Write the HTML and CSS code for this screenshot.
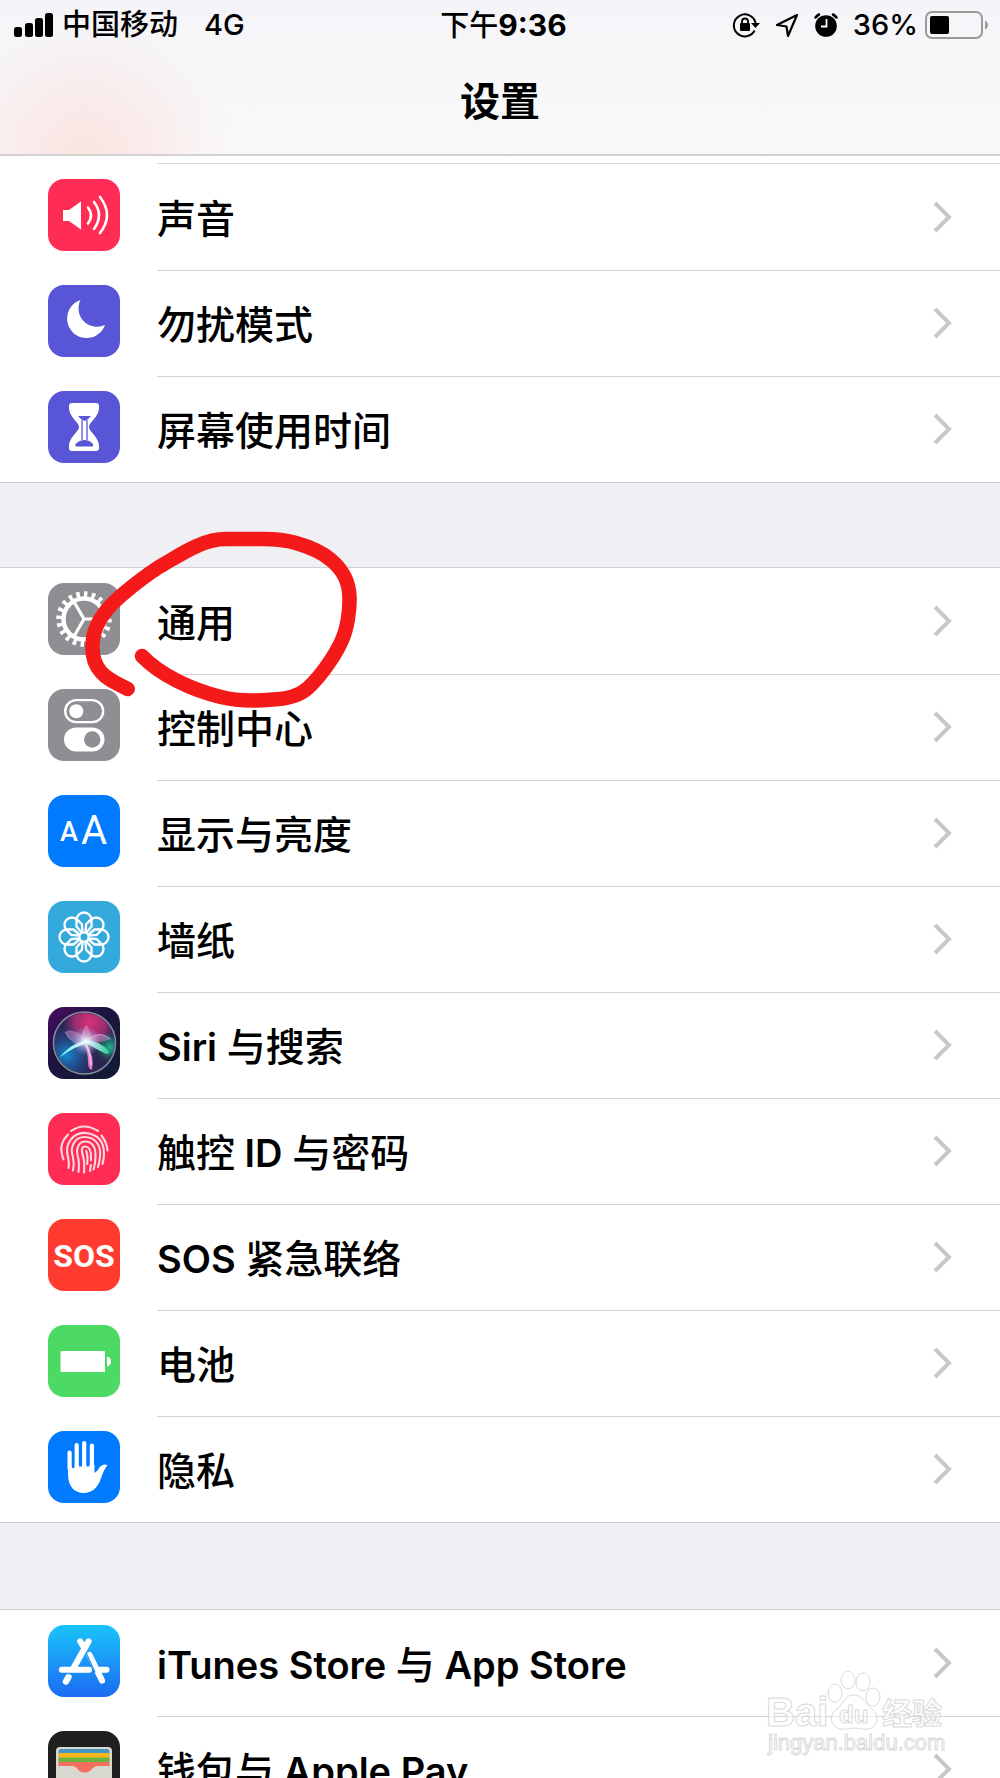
FILE: index.html
```html
<!DOCTYPE html>
<html lang="zh-CN">
<head>
  <meta charset="UTF-8">
  <meta name="viewport" content="width=device-width, initial-scale=1.0">
  <title>设置</title>
  <link rel="stylesheet" href="styles.css">
</head>
<body>
  <!-- Shared shapes -->
  <svg class="defs" aria-hidden="true">
    <symbol id="chevron" viewBox="0 0 20 32">
      <path d="M2 2l14 14L2 30" fill="none" stroke="#c7c7cc" stroke-width="4"/>
    </symbol>
    <symbol id="petal" viewBox="0 0 72 72">
      <path d="M34 32L28.500 25.500V19A7.500 7.500 0 1 1 43.500 19V25.500L38 32" fill="none" stroke="#fff" stroke-width="2.300"/>
    </symbol>
  </svg>

  <header class="header">
    <div class="status-bar">
      <div class="status-left">
        <svg width="40" height="26" viewBox="0 0 40 26" aria-hidden="true">
          <rect x="0" y="15" width="8" height="10" rx="2.5"/>
          <rect x="11" y="11" width="8" height="14" rx="2.5"/>
          <rect x="21" y="6" width="8" height="19" rx="2.5"/>
          <rect x="31" y="1" width="8" height="24" rx="2.5"/>
        </svg>
        <span class="carrier">中国移动</span>
        <span class="network">4G</span>
      </div>
      <div class="status-time">下午<b>9:36</b></div>
      <div class="status-right">
        <!-- rotation lock -->
        <svg width="28" height="28" viewBox="0 0 28 28" aria-hidden="true">
          <path d="M22.6 19.5A11 11 0 1 1 23.6 12" fill="none" stroke="#000" stroke-width="2"/>
          <path d="M19 12h9l-4.500 5z"/>
          <rect x="8" y="12" width="10" height="8" rx="1"/>
          <path d="M10 12.500v-2a3 3 0 0 1 6 0v2" fill="none" stroke="#000" stroke-width="1.800"/>
        </svg>
        <!-- location -->
        <svg width="24" height="26" viewBox="0 0 24 26" aria-hidden="true">
          <path d="M22 3L2 13l9.500 1.500L13 24z" fill="none" stroke="#000" stroke-width="2.200" stroke-linejoin="round"/>
        </svg>
        <!-- alarm -->
        <svg width="24" height="26" viewBox="0 0 24 26" aria-hidden="true">
          <circle cx="12" cy="14" r="10.800"/>
          <path d="M1.500 5.500A11 11 0 0 1 5 2.500M22.500 5.500A11 11 0 0 0 19 2.500" fill="none" stroke="#000" stroke-width="2.600" stroke-linecap="round"/>
          <path d="M12.500 7v7.500H7" fill="none" stroke="#fff" stroke-width="1.800"/>
        </svg>
        <span class="percent">36%</span>
        <svg width="64" height="28" viewBox="0 0 64 28" aria-hidden="true">
          <rect x="1" y="1" width="56" height="26" rx="6" fill="none" stroke="#9a9a9b" stroke-width="2"/>
          <rect x="5" y="5" width="19" height="18" rx="2"/>
          <path d="M60 9.500q3 1.500 3 4.500t-3 4.500z" fill="#9a9a9b"/>
        </svg>
      </div>
    </div>
    <h1>设置</h1>
  </header>

  <main class="content">
    <ul class="group group-first">
      <li><a class="row" href="#">
        <svg class="icon" viewBox="0 0 72 72" aria-hidden="true">
          <rect width="72" height="72" rx="16" fill="#ff2d55"/>
          <path d="M15 31h6l12-8.500v28L21 42h-6z" fill="#fff"/>
          <path d="M40 28.500q6 8 0 16M46 23q10 13 0 27M52 18q14 18 0 36" fill="none" stroke="#fff" stroke-width="2.600" stroke-linecap="round"/>
        </svg>
        <span class="label">声音</span>
        <svg class="chevron" aria-hidden="true"><use href="#chevron"/></svg>
      </a></li>
      <li><a class="row" href="#">
        <svg class="icon" viewBox="0 0 72 72" aria-hidden="true">
          <rect width="72" height="72" rx="16" fill="#5856d6"/>
          <path d="M32.500 15A19.500 19.500 0 1 0 57 40 18.500 18.500 0 0 1 32.500 15z" fill="#fff"/>
        </svg>
        <span class="label">勿扰模式</span>
        <svg class="chevron" aria-hidden="true"><use href="#chevron"/></svg>
      </a></li>
      <li><a class="row" href="#">
        <svg class="icon" viewBox="0 0 72 72" aria-hidden="true">
          <rect width="72" height="72" rx="16" fill="#5856d6"/>
          <path d="M24 12h24q3 0 3 3v2c0 9-10 14-10 19s10 10 10 19v2q0 3-3 3H24q-3 0-3-3v-2c0-9 10-14 10-19S21 26 21 17v-2q0-3 3-3z" fill="#fff"/>
          <path d="M30 25h13q-2 3-6.500 5-4.500-2-6.500-5zM27.500 53q4-4 9-4t8.500 4v2.500H27.500z" fill="#5856d6"/>
          <path d="M34 29v20M39 29v20" fill="none" stroke="#5856d6" stroke-width="1.300"/>
        </svg>
        <span class="label">屏幕使用时间</span>
        <svg class="chevron" aria-hidden="true"><use href="#chevron"/></svg>
      </a></li>
    </ul>

    <ul class="group">
      <li><a class="row" href="#">
        <svg class="icon" viewBox="0 0 72 72" aria-hidden="true">
          <rect width="72" height="72" rx="16" fill="#8e8e93"/>
          <g fill="none" stroke="#fff">
            <circle cx="36" cy="36" r="20.500" stroke-width="4.500"/>
            <circle cx="36" cy="36" r="25" stroke-width="5.500" pathLength="200" stroke-dasharray="4.500 5.500"/>
            <path d="M36 36h20M36 36L26 18.700M36 36L26 53.300" stroke-width="3.200"/>
          </g>
        </svg>
        <span class="label">通用</span>
        <svg class="chevron" aria-hidden="true"><use href="#chevron"/></svg>
      </a>
        <!-- hand-drawn circle round this entry -->
        <svg class="marker" viewBox="0 0 280 190" aria-hidden="true">
          <path d="M47.700 164C36 158 28 155 21 147 12 137 11 125 13.500 111 17 94 31 79 43 69 56 58 68 49 79 42 93 34 105 26 118 20.500 128 16 136 14 146 14H183C196 14 206 15 216 18 230 22 242 27 251 35 263 45 269 56 269.500 72 270 86 267 104 262 115 257 127 243 149 228 163 218 172 206 174 193 174.500 176 176 157 176 141 172 112 165 80 150 62 131" fill="none" stroke="#f41a19" stroke-width="14.500" stroke-linecap="round" stroke-linejoin="round"/>
        </svg>
      </li>
      <li><a class="row" href="#">
        <svg class="icon" viewBox="0 0 72 72" aria-hidden="true">
          <rect width="72" height="72" rx="16" fill="#8e8e93"/>
          <rect x="17.200" y="11.200" width="38" height="22" rx="11" fill="none" stroke="#fff" stroke-width="2.300"/>
          <circle cx="28.300" cy="22.200" r="7" fill="#fff"/>
          <rect x="16" y="38.500" width="40.500" height="24" rx="12" fill="#fff"/>
          <circle cx="44.200" cy="50.500" r="8.200" fill="#8e8e93"/>
        </svg>
        <span class="label">控制中心</span>
        <svg class="chevron" aria-hidden="true"><use href="#chevron"/></svg>
      </a></li>
      <li><a class="row" href="#">
        <svg class="icon" viewBox="0 0 72 72" aria-hidden="true">
          <rect width="72" height="72" rx="16" fill="#007aff"/>
          <text class="glyph-small-a" x="21" y="46">A</text>
          <text class="glyph-large-a" x="46" y="49">A</text>
        </svg>
        <span class="label">显示与亮度</span>
        <svg class="chevron" aria-hidden="true"><use href="#chevron"/></svg>
      </a></li>
      <li><a class="row" href="#">
        <svg class="icon" viewBox="0 0 72 72" aria-hidden="true">
          <rect width="72" height="72" rx="16" fill="#34aadc"/>
          <circle cx="36" cy="36" r="4.500" fill="none" stroke="#fff" stroke-width="2"/>
          <use href="#petal" width="72" height="72"/>
          <use href="#petal" width="72" height="72" transform="rotate(45 36 36)"/>
          <use href="#petal" width="72" height="72" transform="rotate(90 36 36)"/>
          <use href="#petal" width="72" height="72" transform="rotate(135 36 36)"/>
          <use href="#petal" width="72" height="72" transform="rotate(180 36 36)"/>
          <use href="#petal" width="72" height="72" transform="rotate(225 36 36)"/>
          <use href="#petal" width="72" height="72" transform="rotate(270 36 36)"/>
          <use href="#petal" width="72" height="72" transform="rotate(315 36 36)"/>
        </svg>
        <span class="label">墙纸</span>
        <svg class="chevron" aria-hidden="true"><use href="#chevron"/></svg>
      </a></li>
      <li><a class="row" href="#">
        <svg class="icon" viewBox="0 0 72 72" aria-hidden="true">
          <defs>
            <linearGradient id="siri-bg" x1="0" y1="0" x2="1" y2="1">
              <stop offset="0" stop-color="#4b0c63"/>
              <stop offset=".4" stop-color="#1d1440"/>
              <stop offset="1" stop-color="#101c33"/>
            </linearGradient>
            <radialGradient id="siri-pink" gradientUnits="userSpaceOnUse" cx="42" cy="15" r="27">
              <stop offset="0" stop-color="#d93177"/>
              <stop offset=".6" stop-color="#b23176" stop-opacity=".8"/>
              <stop offset="1" stop-color="#8a2a80" stop-opacity="0"/>
            </radialGradient>
            <radialGradient id="siri-blue" gradientUnits="userSpaceOnUse" cx="19" cy="48" r="30">
              <stop offset="0" stop-color="#1689d0"/>
              <stop offset="1" stop-color="#1b4d9b" stop-opacity="0"/>
            </radialGradient>
            <radialGradient id="siri-green" gradientUnits="userSpaceOnUse" cx="62" cy="40" r="16">
              <stop offset="0" stop-color="#1db58c"/>
              <stop offset="1" stop-color="#167867" stop-opacity="0"/>
            </radialGradient>
            <radialGradient id="siri-glow" gradientUnits="userSpaceOnUse" cx="38" cy="34" r="15">
              <stop offset="0" stop-color="#fff"/>
              <stop offset=".25" stop-color="#dff4ff" stop-opacity=".7"/>
              <stop offset="1" stop-color="#b5a4ff" stop-opacity="0"/>
            </radialGradient>
            <linearGradient id="siri-ray" x1="0" y1="0" x2="1" y2="0">
              <stop offset="0" stop-color="#4ff0e6"/>
              <stop offset=".5" stop-color="#e9ffff"/>
              <stop offset="1" stop-color="#27c69a"/>
            </linearGradient>
          </defs>
          <rect width="72" height="72" rx="16" fill="url(#siri-bg)"/>
          <circle cx="36.500" cy="36" r="31" fill="#2c2450"/>
          <circle cx="36.500" cy="36" r="30" fill="url(#siri-pink)"/>
          <circle cx="36.500" cy="36" r="30" fill="url(#siri-blue)"/>
          <circle cx="36.500" cy="36" r="30" fill="url(#siri-green)"/>
          <path d="M17 25Q26 20 38 33 50 21 63 32 52 36 38 35 24 38 17 25z" fill="#e5a5dc" opacity=".4"/>
          <path d="M39 18q-6 9-6 17h10q1-8-4-17z" fill="#f29ac8" opacity=".4"/>
          <path d="M17 25Q25 40 38 35M39 18Q33 26 35 36M63 32Q50 22 40 35" fill="none" stroke="#f0c0e8" stroke-width=".8" opacity=".6"/>
          <path d="M11 51Q22 37 38 33 52 34 61 44q2 3-3 3Q48 42 40 37 28 38 11 51z" fill="url(#siri-ray)"/>
          <path d="M38 35q9 15 6 28-4-1-4-8 0-10-4-18z" fill="#e77ac0"/>
          <path d="M38 36q5 13 5 22" fill="none" stroke="#fbd3ea" stroke-width="1.200"/>
          <circle cx="38" cy="34" r="15" fill="url(#siri-glow)"/>
          <circle cx="36.500" cy="36" r="31" fill="none" stroke="#84929f" stroke-width="1.500"/>
        </svg>
        <span class="label"><span class="latin">Siri </span>与搜索</span>
        <svg class="chevron" aria-hidden="true"><use href="#chevron"/></svg>
      </a></li>
      <li><a class="row" href="#">
        <svg class="icon" viewBox="0 0 72 72" aria-hidden="true">
          <rect width="72" height="72" rx="16" fill="#ff2d55"/>
          <g fill="none" stroke="#ffd9e1" stroke-width="2.100" stroke-linecap="round">
            <path d="M23 18q13-9 27 0"/>
            <path d="M20 21.500q-9 9-6 20l1.500 5"/>
            <path d="M53.500 22.500q5 6 6 15"/>
            <path d="M20.500 55q1-5-.500-11C16 30 26 19 38 20q18 2 18 21 0 5-1.500 10"/>
            <path d="M25 57.500q1.500-7 0-13C21 32 28 24 36.500 24 48 24 53 33 52 43q0 5-2 11"/>
            <path d="M30.500 59q1-9-.500-15c-3-10 2-15.500 7-15.500 8 0 11 7 10.500 15q0 7-2 13"/>
            <path d="M36 59.500q1-12-1.500-18c-1.500-6 0-8 2.500-8 4 0 6 4 6 10v4"/>
            <path d="M38.300 38q2 6 1 13M42.800 52l-.800 6"/>
          </g>
        </svg>
        <span class="label">触控<span class="latin"> ID </span>与密码</span>
        <svg class="chevron" aria-hidden="true"><use href="#chevron"/></svg>
      </a></li>
      <li><a class="row" href="#">
        <svg class="icon" viewBox="0 0 72 72" aria-hidden="true">
          <rect width="72" height="72" rx="16" fill="#ff3b30"/>
          <text class="glyph-sos" x="36" y="48">SOS</text>
        </svg>
        <span class="label"><span class="latin">SOS </span>紧急联络</span>
        <svg class="chevron" aria-hidden="true"><use href="#chevron"/></svg>
      </a></li>
      <li><a class="row" href="#">
        <svg class="icon" viewBox="0 0 72 72" aria-hidden="true">
          <rect width="72" height="72" rx="16" fill="#4cd964"/>
          <rect x="12.500" y="26" width="44.500" height="21" rx="1" fill="#fff"/>
          <path d="M59 31.500q4 1 4 5t-4 5z" fill="#fff"/>
        </svg>
        <span class="label">电池</span>
        <svg class="chevron" aria-hidden="true"><use href="#chevron"/></svg>
      </a></li>
      <li><a class="row" href="#">
        <svg class="icon" viewBox="0 0 72 72" aria-hidden="true">
          <rect width="72" height="72" rx="16" fill="#007aff"/>
          <path d="M20 34V43c0 13 7 19 15.500 19S49 57 52 50c2-5 3-10 7.500-16-5-2-8 2-10 5.500L46.500 42V34z" fill="#fff"/>
          <path d="M25.200 20v17M32.500 14v21.500M40 14v21.500" fill="none" stroke="#007aff" stroke-width="3"/>
          <path d="M21.600 21.500V38M28.700 14v23M36.200 12v25M43.900 14.500V38" fill="none" stroke="#fff" stroke-width="4.200" stroke-linecap="round"/>
        </svg>
        <span class="label">隐私</span>
        <svg class="chevron" aria-hidden="true"><use href="#chevron"/></svg>
      </a></li>
    </ul>

    <ul class="group">
      <li><a class="row" href="#">
        <svg class="icon" viewBox="0 0 72 72" aria-hidden="true">
          <defs>
            <linearGradient id="store-bg" x1="0" y1="0" x2="0" y2="1">
              <stop offset="0" stop-color="#1ac4fb"/>
              <stop offset="1" stop-color="#1c6bf2"/>
            </linearGradient>
          </defs>
          <rect width="72" height="72" rx="16" fill="url(#store-bg)"/>
          <g fill="none" stroke="#fff" stroke-linecap="round">
            <path d="M13.800 44.700H41M52 44.700h6.500" stroke-width="6"/>
            <path d="M40.500 16.500L25 44M32.300 16.500l4 6.500" stroke-width="6.200"/>
            <path d="M20.500 52l-2.500 4.500" stroke-width="6.500"/>
            <path d="M41.500 30L54 55.500" stroke-width="6.200"/>
          </g>
          <path d="M38 27.500l9 20M16 48.600h28" fill="none" stroke="#1c92f6" stroke-width="1.300"/>
        </svg>
        <span class="label"><span class="latin">iTunes Store </span>与<span class="latin"> App Store</span></span>
        <svg class="chevron" aria-hidden="true"><use href="#chevron"/></svg>
      </a></li>
      <li><a class="row" href="#">
        <svg class="icon" viewBox="0 0 72 72" aria-hidden="true">
          <rect width="72" height="72" rx="16" fill="#1f1f1f"/>
          <rect x="8" y="16" width="56" height="44" rx="4" fill="#d9d8d0"/>
          <path d="M10.500 22v-1.500q0-2.500 2.500-2.500h46q2.500 0 2.500 2.500V22z" fill="#4497c0"/>
          <path d="M10.500 22h51v5h-51z" fill="#f6b61c"/>
          <path d="M10.500 26.500h51v5h-51z" fill="#6cb33f"/>
          <path d="M10.500 31h51v4H50c-6 0-6 6.500-13.500 6.500S30 35 24 35H10.500z" fill="#f3705f"/>
        </svg>
        <span class="label">钱包与<span class="latin"> Apple Pay</span></span>
        <svg class="chevron" aria-hidden="true"><use href="#chevron"/></svg>
      </a></li>
    </ul>
  </main>

  <svg class="watermark" viewBox="0 0 190 100" aria-hidden="true">
    <g fill="#fff" fill-opacity=".6" stroke="#d9d9d9">
      <text class="wm-name" x="2" y="58">Bai</text>
      <path d="M90 27c-10 0-9 8-17 14-8 5-8 18 4 20 5 1 8-1 13-1s9 2 14 1c10-1 12-14 4-20-8-5-8-14-18-14z"/>
      <ellipse cx="71" cy="25" rx="7" ry="9"/>
      <ellipse cx="84" cy="12" rx="7" ry="9"/>
      <ellipse cx="99" cy="14" rx="7" ry="9"/>
      <ellipse cx="109" cy="29" rx="7" ry="9"/>
      <text class="wm-du" x="75" y="55">du</text>
      <text class="wm-cn" x="118" y="56">经验</text>
      <text class="wm-url" x="4" y="82">jingyan.baidu.com</text>
    </g>
  </svg>
</body>
</html>
```
FILE: styles.css
```css
* {
  box-sizing: border-box;
}
body {
  position: relative;
  display: flex;
  flex-direction: column;
  height: 100vh;
  margin: 0;
  overflow: hidden;
  background-color: #efeff4;
  color: #000;
  font-family: Inter, "Noto Sans CJK SC", sans-serif;
}
.defs {
  position: absolute;
  width: 0;
  height: 0;
}

/* Header */
.header {
  flex: none;
  padding-bottom: 24px;
  border-bottom: 2px solid #d3d2d3;
  background: radial-gradient(ellipse 150px 130px at 85px 155px, rgba(252, 205, 200, 0.5), rgba(252, 220, 216, 0)),
    linear-gradient(#f5f4f8, #f9f9f9);
}
.status-bar {
  display: grid;
  grid-template-columns: 1fr auto 1fr;
  align-items: center;
  height: 50px;
  padding: 0 11px 0 14px;
  font-size: 29px;
  font-weight: 500;
  line-height: 32px;
}
.status-left,
.status-right {
  display: flex;
  align-items: center;
}
.status-right {
  justify-content: flex-end;
  gap: 15px;
}
.carrier {
  margin-left: 8px;
}
.network {
  margin-left: 26px;
}
.status-time {
  padding-left: 4px;
}
.status-time b {
  font-size: 30px;
  font-weight: 700;
}
.percent {
  margin-right: -8px;
}
h1 {
  margin: 24px 0 0;
  font-size: 40px;
  font-weight: 600;
  line-height: 56px;
  text-align: center;
}

/* Settings list */
.content {
  flex: 1;
  min-height: 0;
  overflow: hidden;
}
.group {
  margin: 0 0 86px;
  padding: 0;
  border-top: 1px solid #d0d0d4;
  border-bottom: 1px solid #d0d0d4;
  background-color: #fff;
  list-style: none;
}
.group-first {
  margin-bottom: 84px;
  padding-top: 8px;
  border-top: none;
}
.group-first::before {
  content: "";
  display: block;
  height: 1px;
  margin: -1px 0 0 157px;
  background-color: #d9d9db;
}
.row {
  display: flex;
  align-items: center;
  height: 106px;
  padding-left: 48px;
  color: inherit;
  text-decoration: none;
}
.icon {
  flex: none;
  width: 72px;
  height: 72px;
  margin-right: 37px;
  margin-bottom: 4px;
}
.label {
  flex: 1;
  padding-top: 4px;
  font-size: 39px;
  font-weight: 500;
  line-height: 56px;
  white-space: pre;
}
.latin {
  font-size: 38px;
  font-weight: 600;
}
.chevron {
  flex: none;
  width: 20px;
  height: 32px;
  margin-right: 47px;
}
.group li {
  position: relative;
}
.group li + li {
  background: linear-gradient(#d3d3d6, #d3d3d6) no-repeat 157px 0 / 100% 1px;
}

/* Marker drawn over the list */
.marker {
  position: absolute;
  top: -43px;
  left: 80px;
  z-index: 1;
  width: 280px;
  height: 190px;
  pointer-events: none;
}

/* Lettering inside icons */
.glyph-small-a,
.glyph-large-a,
.glyph-sos {
  fill: #fff;
  font-family: Roboto, sans-serif;
  text-anchor: middle;
}
.glyph-small-a {
  font-size: 27px;
  font-weight: 500;
}
.glyph-large-a {
  font-size: 40px;
  font-weight: 400;
}
.glyph-sos {
  font-size: 32px;
  font-weight: 700;
}

/* Watermark */
.watermark {
  position: absolute;
  right: 46px;
  bottom: 10px;
  width: 190px;
  height: 100px;
  pointer-events: none;
}
.wm-name {
  font: 700 40px "Liberation Sans", sans-serif;
}
.wm-du {
  font: 700 24px "Liberation Sans", sans-serif;
}
.wm-cn {
  font: 700 30px "Noto Sans CJK SC", sans-serif;
}
.wm-url {
  font: 400 22px "Liberation Sans", sans-serif;
}
```
